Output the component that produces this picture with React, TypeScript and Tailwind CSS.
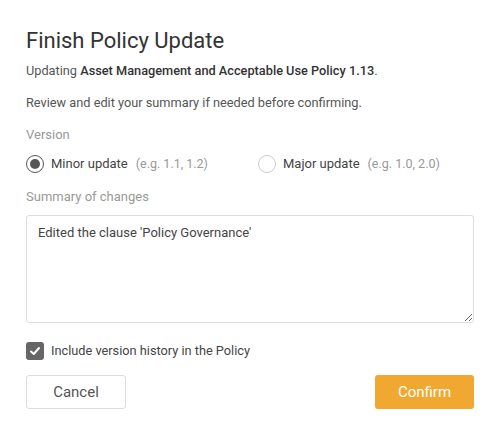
import { useState } from "react";

const App = () => {
  const [version, setVersion] = useState("minor");
  const [summary, setSummary] = useState("Edited the clause 'Policy Governance'");
  const [includeHistory, setIncludeHistory] = useState(true);

  return (
    <div className="w-[501px] h-[436px] bg-white font-['Roboto',sans-serif] text-[#555] pl-[26px] pr-[27px] pt-[25px]">
      <h1 className="text-[22px] leading-[32px] text-[#333]">Finish Policy Update</h1>
      <p className="mt-[4px] text-[12.75px] leading-[20px]">
        Updating <span className="text-[#333] font-medium">Asset Management and Acceptable Use Policy 1.13</span>.
      </p>
      <p className="mt-[12px] text-[12.75px] leading-[20px]">
        Review and edit your summary if needed before confirming.
      </p>

      <div className="mt-[12px] text-[13px] leading-[20px] text-[#999]">Version</div>
      <div className="mt-[10px] flex items-center text-[13px] leading-[18px]">
        <label className="flex items-center w-[232px] cursor-pointer" onClick={() => setVersion("minor")}>
          <span className="w-[18px] h-[18px] rounded-full border border-[#555] flex items-center justify-center">
            {version === "minor" && <span className="w-[10px] h-[10px] rounded-full bg-[#555]" />}
          </span>
          <span className="ml-[7px] text-[#444]">Minor update</span>
          <span className="ml-[8px] text-[12.5px] text-[#999]">(e.g. 1.1, 1.2)</span>
        </label>
        <label className="flex items-center cursor-pointer" onClick={() => setVersion("major")}>
          <span className="w-[18px] h-[18px] rounded-full border border-[#ccc] flex items-center justify-center">
            {version === "major" && <span className="w-[10px] h-[10px] rounded-full bg-[#555]" />}
          </span>
          <span className="ml-[7px] text-[#444]">Major update</span>
          <span className="ml-[8px] text-[12.5px] text-[#999]">(e.g. 1.0, 2.0)</span>
        </label>
      </div>

      <div className="mt-[14px] text-[13px] leading-[20px] text-[#999]">Summary of changes</div>
      <textarea
        value={summary}
        onChange={(e) => setSummary(e.target.value)}
        className="mt-[8px] block w-full h-[108px] border border-[#ddd] rounded-[3px] px-[11px] py-[7px] text-[13px] leading-[20px] text-[#444] outline-none resize-y"
      />

      <label className="mt-[18px] flex items-center cursor-pointer" onClick={() => setIncludeHistory(!includeHistory)}>
        <span className={`w-[18px] h-[18px] rounded-[3px] flex items-center justify-center ${includeHistory ? "bg-[#666]" : "border border-[#ccc]"}`}>
          {includeHistory && (
            <svg width="12" height="12" viewBox="0 0 12 12" fill="none">
              <path d="M2 6.5 L4.8 9 L10 3" stroke="white" strokeWidth="2" strokeLinecap="round" strokeLinejoin="round" />
            </svg>
          )}
        </span>
        <span className="ml-[7px] text-[12.75px] leading-[20px] text-[#444]">Include version history in the Policy</span>
      </label>

      <div className="mt-[14px] flex justify-between">
        <button className="w-[100px] h-[34px] border border-[#ddd] rounded-[3px] text-[15px] text-[#555] bg-white">
          Cancel
        </button>
        <button className="w-[99px] h-[34px] rounded-[3px] text-[15px] text-white bg-[#f0a830]">
          Confirm
        </button>
      </div>
    </div>
  );
};

export default App;
